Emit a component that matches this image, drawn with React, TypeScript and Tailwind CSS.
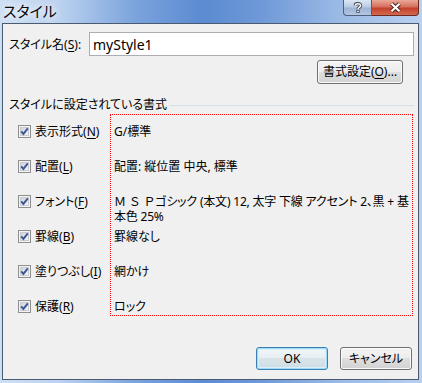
import React from 'react'

const Check = () => (
  <svg width="13" height="13" viewBox="0 0 13 13" className="shrink-0">
    <defs>
      <linearGradient id="cbg" x1="0" y1="0" x2="1" y2="1">
        <stop offset="0" stopColor="#cdd1d6" />
        <stop offset="1" stopColor="#f7f7f7" />
      </linearGradient>
    </defs>
    <rect x="0.5" y="0.5" width="12" height="12" fill="#f4f4f4" stroke="#8f8f8f" />
    <rect x="2.5" y="2.5" width="8" height="8" fill="url(#cbg)" stroke="#c9ccd1" />
    <path d="M3.2 6.4 L5.4 8.9 L9.8 3.4" fill="none" stroke="#3d5796" strokeWidth="1.9" />
  </svg>
)

const U = ({ c }: { c: string }) => <span className="underline underline-offset-[2px]">{c}</span>

const rows = [
  { pre: '表示形式', key: 'N', value: 'G/標準' },
  { pre: '配置', key: 'L', value: '配置: 縦位置 中央, 標準' },
  { pre: 'フォント', key: 'F', value: '' },
  { pre: '罫線', key: 'B', value: '罫線なし' },
  { pre: '塗りつぶし', key: 'I', value: '網かけ' },
  { pre: '保護', key: 'R', value: 'ロック' },
]

const btn =
  'flex items-center justify-center rounded-[3px] border border-[#707070] bg-[linear-gradient(#f4f4f4_0%,#ececec_50%,#dfdfdf_50%,#d2d2d2_100%)] shadow-[inset_0_0_0_1px_#fbfbfb]'

export default function App() {
  return (
    <div className="w-[422px] h-[383px] flex flex-col overflow-hidden bg-[linear-gradient(90deg,#cddff3_0%,#bcd2ef_14%,#7ba3dc_32%,#5b8bd1_48%,#6f99d7_62%,#9ab9e5_80%,#b9d0ef_100%)] font-['Segoe_UI','Noto_Sans','Noto_Sans_CJK_JP',sans-serif] [font-feature-settings:'palt'] text-black text-[12px]">
      {/* title bar */}
      <div className="h-[23px] shrink-0 flex items-start justify-between">
        <span className="pl-[3px] pt-[2px] text-[15px] leading-[18px] text-[#0a0a0a] [text-shadow:0_0_6px_#ffffff,0_0_10px_#ffffff]">
          スタイル
        </span>
        <div className="flex pr-[3px]">
          <div className="w-[29px] h-[16px] rounded-bl-[4px] border border-t-0 border-[#4f607a] bg-[linear-gradient(#dce7f5_0%,#b9cbe4_45%,#9fb5d6_55%,#b3c6e1_100%)] flex items-center justify-center">
            <svg width="10" height="11" viewBox="0 0 10 11">
              <path d="M2.3 3.4 C2.3 1.2 7.6 1 7.6 3.6 C7.6 5.4 5 5.3 5 7.2" fill="none" stroke="#3a3f4a" strokeWidth="3.2" />
              <path d="M2.3 3.4 C2.3 1.2 7.6 1 7.6 3.6 C7.6 5.4 5 5.3 5 7.2" fill="none" stroke="#ffffff" strokeWidth="1.6" />
              <rect x="3.4" y="8" width="3.2" height="3" fill="#3a3f4a" />
              <rect x="4.2" y="8.7" width="1.6" height="1.6" fill="#ffffff" />
            </svg>
          </div>
          <div className="w-[47px] h-[16px] rounded-br-[4px] border border-t-0 border-l-0 border-[#6b2a22] bg-[linear-gradient(#e9a898_0%,#d6705d_45%,#c4412c_55%,#d36a50_100%)] flex items-center justify-center">
            <svg width="13" height="11" viewBox="0 0 13 11">
              <path d="M2.5 1.8 L10.5 9.2 M10.5 1.8 L2.5 9.2" stroke="#4a1f1a" strokeWidth="4" />
              <path d="M2.5 1.8 L10.5 9.2 M10.5 1.8 L2.5 9.2" stroke="#ffffff" strokeWidth="2.2" />
            </svg>
          </div>
        </div>
      </div>

      {/* client area */}
      <div className="ml-[2px] w-[417px] h-[357px] shrink-0 border border-[#4a5a70] bg-[#f0f0f0] flex flex-col">
        <div className="mt-[8px] h-[24px] shrink-0 flex items-center pl-[6px] pr-[4px]">
          <span className="w-[80px] leading-[15px]">
            スタイル名(<U c="S" />):
          </span>
          <div className="flex-1 h-[24px] border border-[#abadb3] bg-white pl-[3px] flex items-center text-[14px]">
            myStyle1
          </div>
        </div>

        <div className="mt-[4px] shrink-0 flex justify-end pr-[15px]">
          <div className={`${btn} w-[86px] h-[24px]`}>
            書式設定(<U c="O" />)...
          </div>
        </div>

        <div className="mt-[14px] h-[14px] shrink-0 flex items-center pl-[6px] pr-[4px]">
          <span className="leading-[14px]">スタイルに設定されている書式</span>
          <div className="flex-1 h-px bg-[#d5dfe5] ml-[3px]" />
        </div>

        <div className="mt-[2px] h-[202px] shrink-0 flex">
          <div className="w-[107px] h-[202px] pl-[15px] pt-[10px] flex flex-col">
            {rows.map((r) => (
              <div key={r.key} className="h-[35px] shrink-0">
                <div className="h-[15px] flex items-center gap-[4px] leading-[15px]">
                  <Check />
                  <span className="whitespace-nowrap">
                    {r.pre}(<U c={r.key} />)
                  </span>
                </div>
              </div>
            ))}
          </div>
          <div className="w-[303px] h-[202px] border border-dotted border-[#ff0000] pl-[3px] pt-[9px] flex flex-col overflow-hidden">
            {rows.map((r) => (
              <div key={r.key} className="h-[35px] shrink-0 leading-[15px] whitespace-nowrap">
                {r.key === 'F' ? (
                  <p className="tracking-[-0.2px]">
                    <span className="[font-feature-settings:normal]">Ｍ Ｓ Ｐ</span>ゴシック (本文) 12, 太字 下線 アクセント 2、黒 + 基
                    <br />
                    本色 25%
                  </p>
                ) : (
                  r.value
                )}
              </div>
            ))}
          </div>
        </div>

        <div className="mt-[31px] shrink-0 flex justify-end gap-[12px] pr-[6px]">
          <div className="w-[72px] h-[23px] flex items-center justify-center rounded-[3px] border border-[#3c7fb1] bg-[linear-gradient(#f2f6f9_0%,#e6eef3_50%,#d9e4ea_50%,#cfdce3_100%)] shadow-[inset_0_0_0_1px_#9edbf9,inset_0_0_0_2px_#d8f0fc]">
            OK
          </div>
          <div className={`${btn} w-[72px] h-[23px]`}>キャンセル</div>
        </div>
      </div>
    </div>
  )
}
